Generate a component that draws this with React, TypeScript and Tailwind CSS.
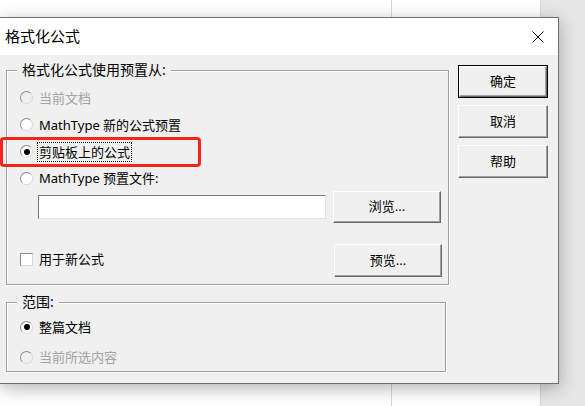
import React from "react";

function Radio({
  checked = false,
  disabled = false,
}: {
  checked?: boolean;
  disabled?: boolean;
}) {
  return (
    <span
      className={`flex h-[13px] w-[13px] shrink-0 items-center justify-center rounded-full border border-t-[#8c8c8c] border-l-[#8c8c8c] border-r-[#d8d8d8] border-b-[#d8d8d8] ${
        disabled ? "bg-[#f0f0f0]" : "bg-white"
      }`}
    >
      {checked && <span className="h-[6px] w-[6px] rounded-full bg-black" />}
    </span>
  );
}

function Button({
  children,
  isDefault = false,
  className = "",
}: {
  children: React.ReactNode;
  isDefault?: boolean;
  className?: string;
}) {
  return (
    <div className={`flex ${isDefault ? "border border-black" : ""} ${className}`}>
      <button className="flex flex-1 items-center justify-center border border-t-white border-l-white border-r-[#696969] border-b-[#696969] bg-[#f0f0f0] text-[13px] text-black shadow-[inset_-1px_-1px_0_#a0a0a0]">
        {children}
      </button>
    </div>
  );
}

function RadioRow({
  label,
  checked,
  disabled,
  focused,
  className = "",
}: {
  label: string;
  checked?: boolean;
  disabled?: boolean;
  focused?: boolean;
  className?: string;
}) {
  return (
    <label className={`flex items-center ${className}`}>
      <Radio checked={checked} disabled={disabled} />
      <span
        className={`ml-[4px] px-[1px] text-[13px] leading-[18px] ${
          disabled ? "text-[#a3a3a3]" : "text-black"
        } ${focused ? "border border-dotted border-black" : "border border-transparent"}`}
      >
        {label}
      </span>
    </label>
  );
}

const groupBox =
  "relative border border-[#a0a0a0] shadow-[inset_1px_1px_0_#ffffff,1px_1px_0_#ffffff]";

export default function App() {
  return (
    <div className="relative h-[406px] w-[585px] overflow-hidden bg-white font-['Noto_Sans','Noto_Sans_CJK_SC',sans-serif] text-[14px]">
      {/* document behind the dialog */}
      <div className="flex h-full">
        <div className="w-[392px] border-r border-[#d6d6d6] bg-white" />
        <div className="w-[148px] bg-white" />
        <div className="flex-1 border-l border-[#d6d6d6] bg-[#e6e6e6]" />
      </div>

      {/* dialog */}
      <div className="absolute left-0 top-[17px] flex h-[367px] w-[559px] flex-col border border-l-0 border-[#6f6f6f] bg-[#f0f0f0] shadow-[0_4px_16px_rgba(0,0,0,0.3)]">
        <div className="flex h-[37px] items-center justify-between bg-white pl-[5px] pr-[14px]">
          <span className="text-[15px] text-black">格式化公式</span>
          <svg width="12" height="12" viewBox="0 0 12 12">
            <path d="M0.5 0.5 L11.5 11.5 M11.5 0.5 L0.5 11.5" stroke="#000" strokeWidth="1" />
          </svg>
        </div>

        <div className="flex flex-1 pl-[6px]">
          {/* left column */}
          <div className="flex w-[443px] flex-col">
            <div className={`${groupBox} mt-[15px] pl-[13px] pr-[6px] pb-[7px] pt-[13px]`}>
              <span className="absolute left-[10px] top-[-11px] bg-[#f0f0f0] px-[5px] leading-[20px]">
                格式化公式使用预置从:
              </span>
              <RadioRow className="h-[27px]" label="当前文档" disabled />
              <RadioRow className="h-[27px]" label="MathType 新的公式预置" />
              <RadioRow className="h-[27px]" label="剪贴板上的公式" checked focused />
              <RadioRow className="h-[26px]" label="MathType 预置文件:" />
              <div className="flex h-[32px] items-center">
                <div className="ml-[18px] h-[24px] w-[288px] border border-t-[#7a7a7a] border-l-[#7a7a7a] border-r-[#e3e3e3] border-b-[#e3e3e3] bg-white" />
                <Button className="ml-[7px] h-[32px] w-[108px]">浏览...</Button>
              </div>
              <div className="mt-[21px] flex h-[33px] items-start justify-between">
                <label className="mt-[6px] flex items-center">
                  <span className="h-[13px] w-[13px] border border-t-[#8c8c8c] border-l-[#8c8c8c] border-r-[#d8d8d8] border-b-[#d8d8d8] bg-white" />
                  <span className="ml-[6px] text-[13px] leading-[18px]">用于新公式</span>
                </label>
                <Button className="h-[33px] w-[108px]">预览...</Button>
              </div>
            </div>

            <div className={`${groupBox} mt-[17px] w-[440px] pl-[13px] pt-[10px]`}>
              <span className="absolute left-[10px] top-[-11px] bg-[#f0f0f0] px-[5px] leading-[20px]">
                范围:
              </span>
              <div className="flex flex-col gap-[2px]">
                <RadioRow className="h-[28px]" label="整篇文档" checked />
                <RadioRow className="h-[28px]" label="当前所选内容" disabled />
              </div>
            </div>
          </div>

          {/* right column */}
          <div className="ml-[9px] flex flex-col gap-[7px] pt-[10px]">
            <Button isDefault className="h-[33px] w-[90px]">确定</Button>
            <Button className="h-[33px] w-[90px]">取消</Button>
            <Button className="h-[33px] w-[90px]">帮助</Button>
          </div>
        </div>
      </div>

      {/* red highlight annotation */}
      <div className="absolute left-0 top-[137px] h-[30px] w-[201px] rounded-[4px] border-[3px] border-[#f5251c]" />
    </div>
  );
}
